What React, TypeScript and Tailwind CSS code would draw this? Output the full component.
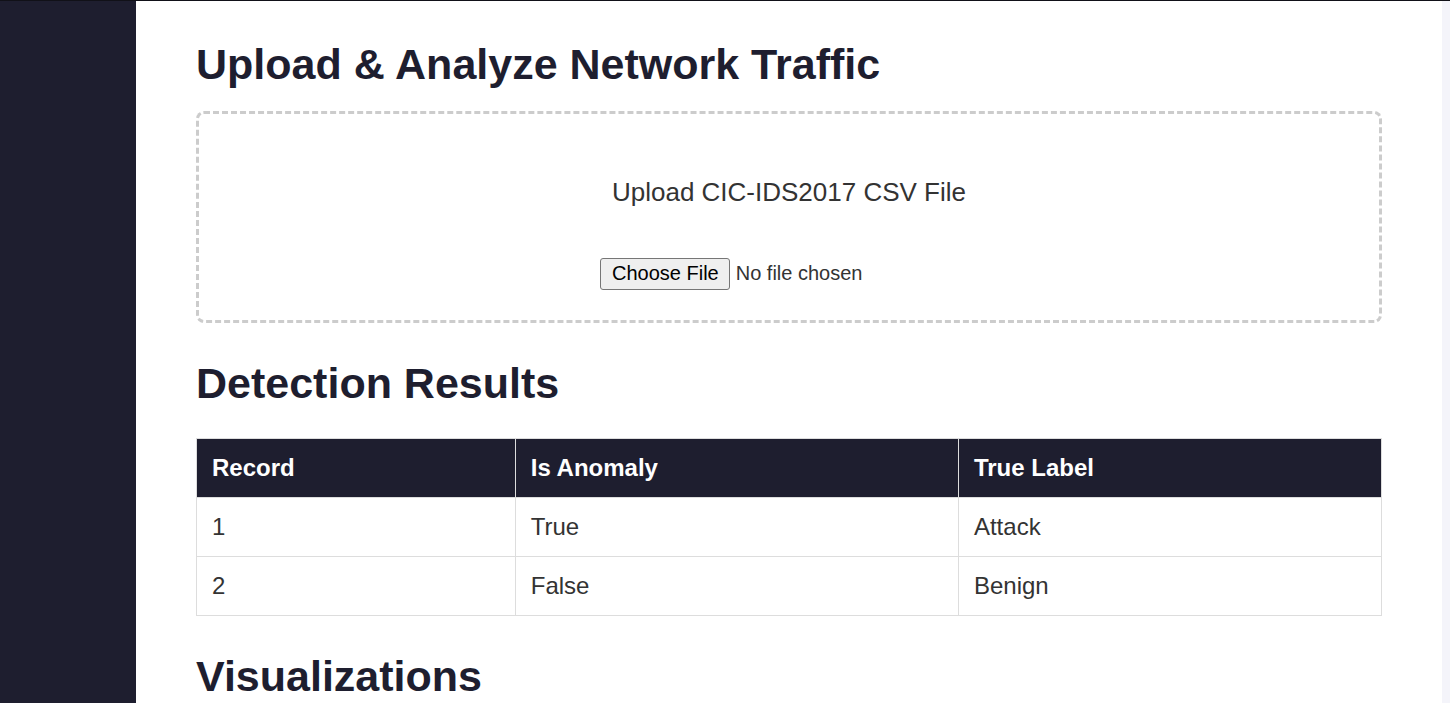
const rows = [
  { record: "1", anomaly: "True", label: "Attack" },
  { record: "2", anomaly: "False", label: "Benign" },
];

function Heading({ children }: { children: string }) {
  return <h2 className="text-[43px] leading-[50px] font-bold text-[#1e1e2f]">{children}</h2>;
}

function UploadBox() {
  return (
    <div className="mt-[22px] flex flex-col items-center rounded-lg border-[3px] border-dashed border-[#cccccc] px-8 pt-[63px] pb-[30px]">
      <label htmlFor="csv" className="text-[26px] leading-[30px]">
        Upload CIC-IDS2017 CSV File
      </label>
      <input
        id="csv"
        type="file"
        className="mt-[51px] h-8 w-[378px] text-[20px] leading-6 file:mr-[6px] file:h-8 file:rounded-[3px] file:border file:border-solid file:border-[#767676] file:bg-[#efefef] file:pr-[10px] file:pb-[2px] file:pl-[11px] file:text-[20px] file:text-black"
      />
    </div>
  );
}

function ResultsTable() {
  return (
    <table className="mt-[30px] w-full table-fixed border-collapse text-left text-[24px] leading-[28px]">
      <colgroup>
        <col className="w-[26.9%]" />
        <col className="w-[37.4%]" />
        <col />
      </colgroup>
      <thead className="bg-[#1e1e2f] text-white">
        <tr>
          {["Record", "Is Anomaly", "True Label"].map((name) => (
            <th key={name} scope="col" className="border border-[#dddddd] p-[15px] font-bold">
              {name}
            </th>
          ))}
        </tr>
      </thead>
      <tbody>
        {rows.map((row) => (
          <tr key={row.record}>
            <td className="border border-[#dddddd] p-[15px]">{row.record}</td>
            <td className="border border-[#dddddd] p-[15px]">{row.anomaly}</td>
            <td className="border border-[#dddddd] p-[15px]">{row.label}</td>
          </tr>
        ))}
      </tbody>
    </table>
  );
}

export default function App() {
  return (
    <div className="flex h-screen overflow-hidden border-t border-[#111118] bg-[#f4f4fa] font-['Liberation_Sans',Arial,sans-serif] text-[#333333]">
      <aside className="w-[136px] shrink-0 bg-[#1e1e2f]" />
      <main className="mr-2 min-w-0 grow bg-white px-[60px] pt-[38px]">
        <section>
          <Heading>Upload & Analyze Network Traffic</Heading>
          <UploadBox />
        </section>
        <section className="mt-[35px]">
          <Heading>Detection Results</Heading>
          <ResultsTable />
        </section>
        <section className="mt-[35px]">
          <Heading>Visualizations</Heading>
        </section>
      </main>
    </div>
  );
}
